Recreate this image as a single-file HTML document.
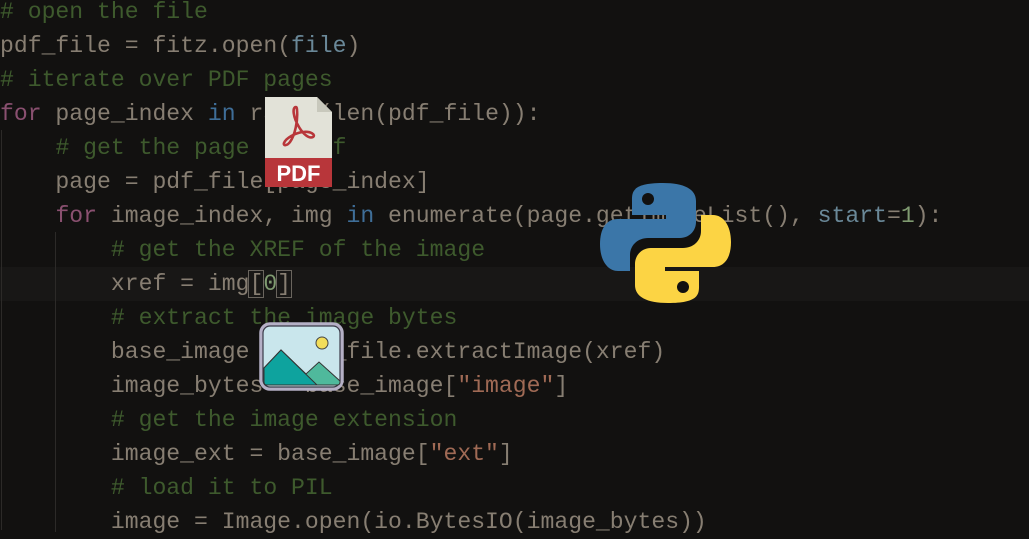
<!DOCTYPE html>
<html><head><meta charset="utf-8"><style>
html,body{margin:0;padding:0}
body{width:1029px;height:518px;overflow:hidden;background:#121110;position:relative;font-family:"Liberation Mono",monospace;font-size:23.1px}
.code{position:absolute;left:0;top:-5px;white-space:pre;line-height:34px;color:#877e72}
.c{color:#3e5a2d}.k{color:#8a5070}.b{color:#3f6e98}.v{color:#6a8898}.s{color:#a06a55}.f{color:#877e72}.n{color:#7f9a70}
.hl{position:absolute;left:0;right:0;top:267px;height:34px;background:#181716}
.g{position:absolute;width:1px;background:#2c2a28}
.br{outline:1px solid #6a655e}
</style></head><body>
<div class="hl"></div>
<div class="g" style="left:1px;top:130px;height:400px"></div>
<div class="g" style="left:55px;top:232px;height:300px"></div>
<div class="code"><span class="c"># open the file</span>
pdf_file = <span class="f">fitz.open</span>(<span class="v">file</span>)
<span class="c"># iterate over PDF pages</span>
<span class="k">for</span> page_index <span class="b">in</span> <span class="f">range</span>(<span class="f">len</span>(pdf_file)):
    <span class="c"># get the page itself</span>
    page = pdf_file[page_index]
    <span class="k">for</span> image_index, img <span class="b">in</span> <span class="f">enumerate</span>(page.getImageList(), <span class="v">start</span>=<span class="n">1</span>):
        <span class="c"># get the XREF of the image</span>
        xref = img<span class="br">[</span><span class="n">0</span><span class="br">]</span>
        <span class="c"># extract the image bytes</span>
        base_image = pdf_file.<span class="f">extractImage</span>(xref)
        image_bytes = base_image[<span class="s">"image"</span>]
        <span class="c"># get the image extension</span>
        image_ext = base_image[<span class="s">"ext"</span>]
        <span class="c"># load it to PIL</span>
        image = Image.<span class="f">open</span>(io.BytesIO(image_bytes))</div>

<svg style="position:absolute;left:265px;top:97px" width="68" height="90" viewBox="0 0 68 90">
<path d="M0 0H52L67 15V90H0Z" fill="#e2e2d8"/><path d="M52 0V15H67Z" fill="#c8c8bc"/>
<rect x="0" y="61" width="67" height="29" fill="#b8363a"/>
<path d="M31 10c-4 0-3 10 3 20c4 7 10 12 14 10c3-2-2-6-10-5c-8 1-17 6-19 11c-1 3 3 3 6-1c5-7 8-21 7-32c0-3-1-3-1-3z" fill="none" stroke="#b8363a" stroke-width="2.6"/>
<text x="33.5" y="84" text-anchor="middle" font-family="Liberation Sans,sans-serif" font-weight="bold" font-size="22" fill="#fff">PDF</text>
</svg>

<svg style="position:absolute;left:259px;top:322px" width="85" height="69" viewBox="0 0 85 69">
<rect x="2" y="2" width="81" height="65" rx="9" fill="#c9e6ec" stroke="#b5b0c6" stroke-width="3.5"/>
<rect x="4" y="4" width="77" height="61" rx="7" fill="none" stroke="#3a3a48" stroke-width="1.2"/>
<circle cx="63" cy="21" r="6" fill="#f2dd5a" stroke="#444" stroke-width="1"/>
<path d="M5 59V46L22 28L47 52L60 40L81 59V60Q81 63 78 63H8Q5 63 5 60Z" fill="#4fb99c" stroke="#333" stroke-width="1"/>
<path d="M5 60V46L22 28L58 63H8Q5 63 5 60Z" fill="#0ea39e" stroke="#333" stroke-width="1"/>
</svg>

<svg style="position:absolute;left:600px;top:183px" width="131" height="120" viewBox="0 0 131 120">
<path d="M63 0C30 0 32 10 32 20V32H66V36H18C6 36 0 46 0 61C0 78 8 88 18 88H30V72C30 62 38 55 48 55H80C89 55 96 48 96 39V18C96 6 84 0 63 0Z" fill="#3b76a8"/>
<circle cx="48" cy="16" r="6" fill="#121110"/>
<path d="M68 120C101 120 99 110 99 100V88H65V84H113C125 84 131 74 131 59C131 42 123 32 113 32H101V48C101 58 93 65 83 65H51C42 65 35 72 35 81V102C35 114 47 120 68 120Z" fill="#fcd444"/>
<circle cx="83" cy="104" r="6" fill="#121110"/>
</svg>
</body></html>
